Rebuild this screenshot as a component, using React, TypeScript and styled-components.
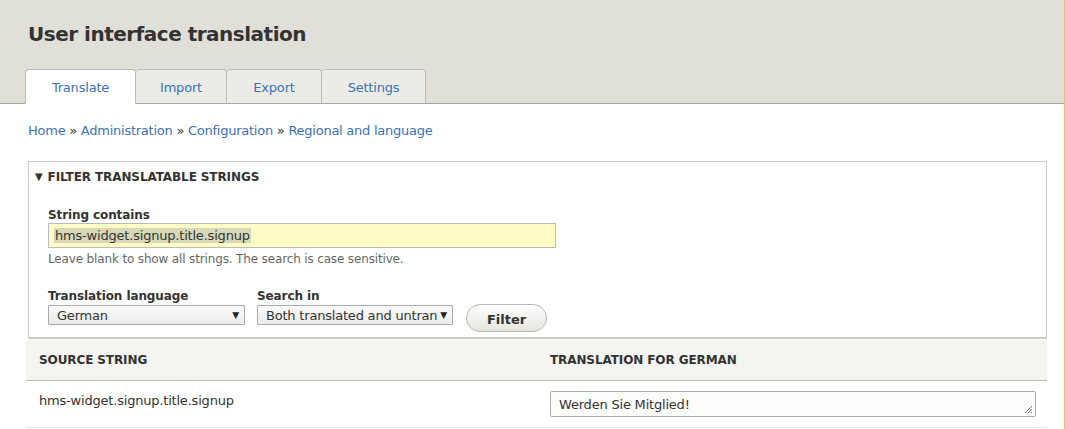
import React from "react";
import styled, { createGlobalStyle } from "styled-components";

const GlobalStyle = createGlobalStyle`
  html, body { margin: 0; padding: 0; background: #fff; }
  body { font-family: "DejaVu Sans", "Noto Sans", sans-serif; color: #333; }
  * { box-sizing: border-box; }
`;

const Page = styled.div`
  width: 1065px;
  min-height: 429px;
  border-right: 1px solid #f0b878;
  background: #fff;
  overflow: hidden;
`;

const Header = styled.header`
  background: #e0dfd8;
  border-bottom: 1px solid #a6a6a6;
  padding: 21px 0 0 25px;
  height: 104px;
  display: flex;
  flex-direction: column;
  justify-content: space-between;
`;

const Title = styled.h1`
  margin: 0 0 0 3px;
  font-size: 20px;
  line-height: 26px;
  font-weight: bold;
  color: #333;
  letter-spacing: -0.5px;
`;

const Tabs = styled.ul`
  list-style: none;
  margin: 0 0 -1px 0;
  padding: 0;
  display: flex;
`;

const Tab = styled.li<{ $active?: boolean; $w: number; $first?: boolean }>`
  height: 35px;
  display: flex;
  align-items: center;
  justify-content: center;
  padding-top: 1px;
  width: ${(p) => p.$w}px;
  background: ${(p) => (p.$active ? "#fff" : "#ecece6")};
  border: 1px solid #bbb;
  border-bottom: ${(p) => (p.$active ? "1px solid #fff" : "1px solid #a6a6a6")};
  border-left: ${(p) => (p.$first ? "1px solid #bbb" : "none")};
  border-radius: 4px 4px 0 0;
  font-size: 13px;
  color: #3a73b8;
  letter-spacing: -0.2px;
`;

const Content = styled.main`
  padding: 18px 17px 0 26px;
`;

const Breadcrumb = styled.nav`
  margin-left: 2px;
  font-size: 13px;
  line-height: 18px;
  color: #333;
  letter-spacing: -0.25px;
  a { color: #3a73b8; text-decoration: none; }
`;

const Fieldset = styled.section`
  margin: 21px 0 0 2px;
  border: 1px solid #ccc;
  border-bottom: 2px solid #ccc;
  padding: 7px 19px 12px 6px;
`;

const Legend = styled.div`
  font-size: 12px;
  font-weight: bold;
  text-transform: uppercase;
  color: #333;
  line-height: 16px;
  letter-spacing: -0.1px;
  display: flex;
  align-items: center;
  gap: 5px;
`;

const Arrow = styled.span`
  font-size: 10px;
`;

const FormItem = styled.div`
  padding-left: 13px;
  margin-top: 23px;
`;

const Label = styled.label`
  display: block;
  font-size: 12px;
  font-weight: bold;
  line-height: 15px;
  color: #333;
  letter-spacing: -0.1px;
`;

const TextInput = styled.div`
  margin-top: 0;
  width: 508px;
  height: 25px;
  background: #fffbc4;
  border: 1px solid #bbb;
  padding: 0 5px;
  display: flex;
  align-items: center;
  font-size: 13px;
  color: #333;
  letter-spacing: -0.2px;
`;

const Selected = styled.span`
  background: #d6d8b8;
  padding: 0 1px;
`;

const Description = styled.div`
  margin-top: 4px;
  font-size: 12px;
  color: #666;
  line-height: 15px;
  letter-spacing: -0.15px;
`;

const InlineRow = styled.div`
  display: flex;
  align-items: flex-end;
  gap: 12px;
  margin-top: 22px;
  padding-left: 13px;
`;

const Field = styled.div``;

const Select = styled.div<{ $w: number }>`
  margin-top: 1px;
  width: ${(p) => p.$w}px;
  height: 20px;
  border: 1px solid #aaa;
  border-radius: 1px;
  background: linear-gradient(#fafafa, #ececec);
  display: flex;
  align-items: center;
  padding: 0 5px 0 8px;
  font-size: 13px;
  color: #333;
  letter-spacing: -0.2px;
  white-space: nowrap;
`;

const SelectText = styled.span`
  flex: 1;
  min-width: 0;
  overflow: hidden;
`;

const Caret = styled.span`
  font-size: 9px;
  color: #222;
  flex: none;
  margin-left: 3px;
`;

const Button = styled.button`
  margin: 0 0 -7px 1px;
  width: 81px;
  height: 28px;
  border: 1px solid #b8b8b8;
  border-radius: 14px;
  background: linear-gradient(#fdfdfd, #e6e6e0);
  font-family: inherit;
  font-size: 13px;
  font-weight: bold;
  color: #333;
  padding: 2px 0 0;
`;

const Table = styled.div`
  margin-top: 1px;
`;

const HeadRow = styled.div`
  display: grid;
  grid-template-columns: 511px 1fr;
  height: 41px;
  align-items: center;
  background: #f4f4f0;
  border-bottom: 1px solid #bbb;
  padding-left: 13px;
  font-size: 12px;
  font-weight: bold;
  text-transform: uppercase;
  color: #333;
  letter-spacing: -0.1px;
`;

const BodyRow = styled.div`
  display: grid;
  grid-template-columns: 511px 1fr;
  height: 47px;
  align-items: center;
  border-bottom: 1px solid #e6e6e0;
  padding-left: 13px;
  font-size: 13px;
  color: #333;
  letter-spacing: -0.2px;
`;

const SourceText = styled.span`
  margin-top: -7px;
`;

const TextArea = styled.div`
  position: relative;
  width: 486px;
  height: 26px;
  border: 1px solid #aaa;
  border-radius: 2px;
  background: #fdfdfc;
  padding: 0 8px;
  display: flex;
  align-items: center;
  font-size: 13px;
  color: #333;
`;

const Grip = styled.svg`
  position: absolute;
  right: 2px;
  bottom: 2px;
`;

export default function App() {
  const tabs = [
    { label: "Translate", w: 111, active: true },
    { label: "Import", w: 91 },
    { label: "Export", w: 95 },
    { label: "Settings", w: 104 },
  ];
  return (
    <>
      <GlobalStyle />
      <Page>
        <Header>
          <Title>User interface translation</Title>
          <Tabs>
            {tabs.map((t, i) => (
              <Tab key={t.label} $active={t.active} $w={t.w} $first={i === 0}>
                {t.label}
              </Tab>
            ))}
          </Tabs>
        </Header>
        <Content>
          <Breadcrumb>
            <a href="#">Home</a> » <a href="#">Administration</a> » <a href="#">Configuration</a> »{" "}
            <a href="#">Regional and language</a>
          </Breadcrumb>
          <Fieldset>
            <Legend>
              <Arrow>▼</Arrow>
              Filter translatable strings
            </Legend>
            <FormItem>
              <Label>String contains</Label>
              <TextInput>
                <Selected>hms-widget.signup.title.signup</Selected>
              </TextInput>
              <Description>Leave blank to show all strings. The search is case sensitive.</Description>
            </FormItem>
            <InlineRow>
              <Field>
                <Label>Translation language</Label>
                <Select $w={197}>
                  <SelectText>German</SelectText>
                  <Caret>▼</Caret>
                </Select>
              </Field>
              <Field>
                <Label>Search in</Label>
                <Select $w={196}>
                  <SelectText>Both translated and untranslated strings</SelectText>
                  <Caret>▼</Caret>
                </Select>
              </Field>
              <Button>Filter</Button>
            </InlineRow>
          </Fieldset>
          <Table>
            <HeadRow>
              <span>Source string</span>
              <span>Translation for German</span>
            </HeadRow>
            <BodyRow>
              <SourceText>hms-widget.signup.title.signup</SourceText>
              <TextArea>
                Werden Sie Mitglied!
                <Grip width="9" height="9" viewBox="0 0 9 9">
                  <path d="M1 8 L8 1 M4 8 L8 4 M7 8 L8 7" stroke="#777" strokeWidth="1" fill="none" />
                </Grip>
              </TextArea>
            </BodyRow>
          </Table>
        </Content>
      </Page>
    </>
  );
}
